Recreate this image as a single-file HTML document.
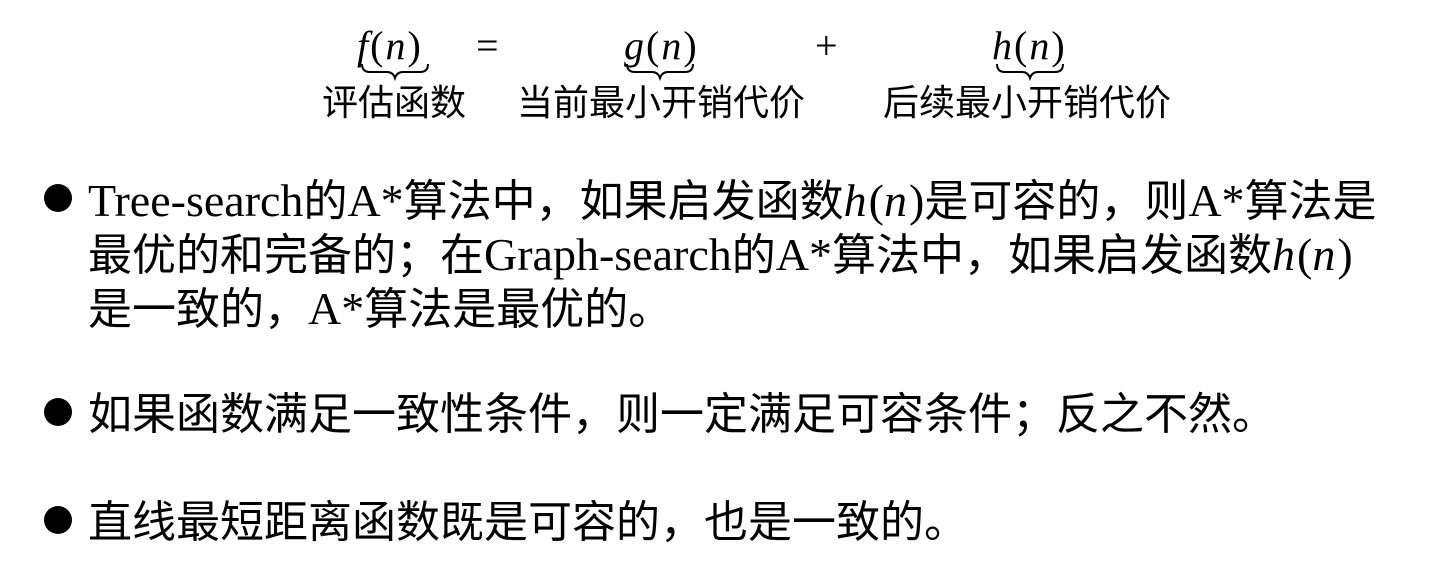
<!DOCTYPE html>
<html><head><meta charset="utf-8"><style>
body{margin:0;width:1437px;height:582px;background:#fff;position:relative;overflow:hidden;font-family:"Liberation Serif","Noto Sans CJK SC",serif;color:#000}
.a{position:absolute;white-space:nowrap}
.m{font-style:italic;font-size:40px;letter-spacing:2px}
.lab{font-family:"Noto Sans CJK SC",sans-serif;font-size:36px;top:74px}
.t{font-size:44px;left:88px;font-family:"Liberation Serif","Noto Sans CJK SC",serif}
.t b{font-weight:normal;font-size:46px}
.d{position:absolute;left:44px;width:28px;height:28px;border-radius:50%;background:#000}
i{font-family:"Liberation Serif",serif;font-size:46px;letter-spacing:2px}
</style></head><body>
<div class="a m" style="left:357px;top:22px">f<span style="font-style:normal">(</span>n<span style="font-style:normal">)</span></div>
<div class="a" style="left:476px;top:22px;font-size:40px">=</div>
<div class="a m" style="left:624px;top:22px">g<span style="font-style:normal">(</span>n<span style="font-style:normal">)</span></div>
<div class="a" style="left:815px;top:22px;font-size:40px">+</div>
<div class="a m" style="left:992px;top:22px">h<span style="font-style:normal">(</span>n<span style="font-style:normal">)</span></div>
<svg class="a" style="left:0;top:0" width="1437" height="100">
<g fill="none" stroke="#000" stroke-width="2">
<path d="M362 64q0 8 8 8h17q6 0 8 6q2-6 8-6h17q8 0 8-8"/>
<path d="M627 64q0 8 8 8h17q6 0 8 6q2-6 8-6h17q8 0 8-8"/>
<path d="M997 64q0 8 8 8h17q6 0 8 6q2-6 8-6h17q8 0 8-8"/>
</g></svg>
<div class="a lab" style="left:322px">评估函数</div>
<div class="a lab" style="left:517px">当前最小开销代价</div>
<div class="a lab" style="left:883px">后续最小开销代价</div>

<div class="d" style="top:184px"></div>
<div class="a t" style="top:174px;line-height:53px"><b>Tree-search</b>的<b>A*</b>算法中，如果启发函数<i>h</i><b>(</b><i>n</i><b>)</b>是可容的，则<b>A*</b>算法是<br>最优的和完备的；在<b>Graph-search</b>的<b>A*</b>算法中，如果启发函数<i>h</i><b>(</b><i>n</i><b>)</b><br>是一致的，<b>A*</b>算法是最优的。</div>
<div class="d" style="top:398px"></div>
<div class="a t" style="top:388px;line-height:53px">如果函数满足一致性条件，则一定满足可容条件；反之不然。</div>
<div class="d" style="top:506px"></div>
<div class="a t" style="top:496px;line-height:53px">直线最短距离函数既是可容的，也是一致的。</div>
</body></html>
